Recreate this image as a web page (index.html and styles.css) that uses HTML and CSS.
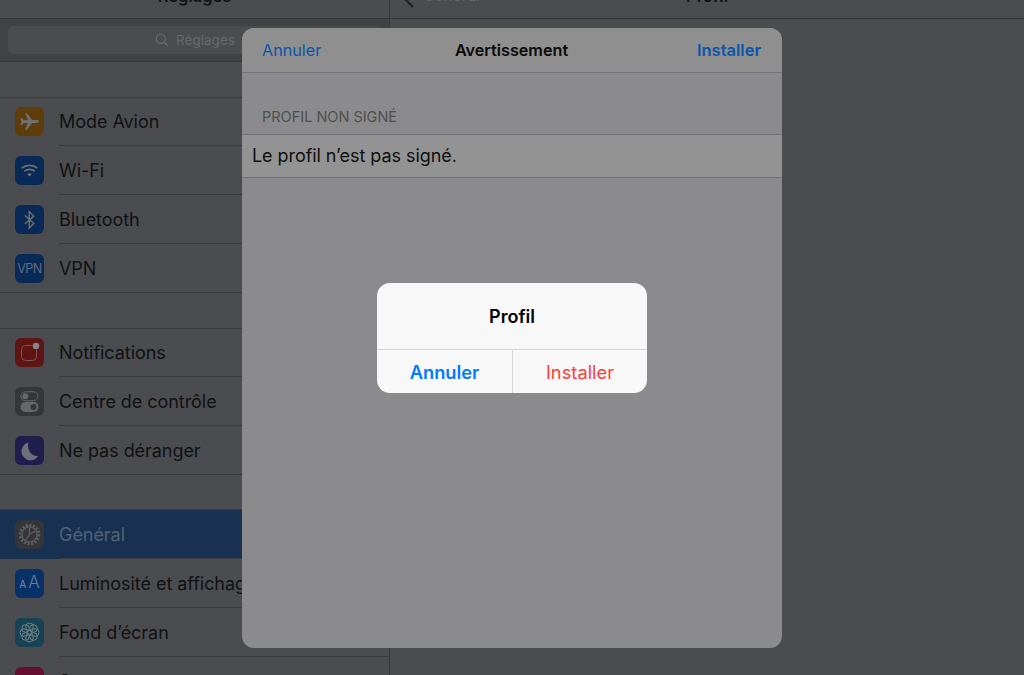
FILE: index.html

```html
<!DOCTYPE html>
<html lang="fr">
<head>
	<meta charset="UTF-8">
	<title>Réglages - Profil</title>
	<link rel="stylesheet" href="styles.css">
</head>
<body>
	<div class="screen">
		<aside class="sidebar">
			<header class="topbar"><span class="topbar-title">Réglages</span></header>
			<div class="searchbar">
				<div class="searchbox">
					<svg class="search-icon" width="14" height="14" viewBox="0 0 14 14"><circle cx="5.800" cy="5.800" r="4.600" fill="none" stroke="#6c6d6f" stroke-width="1.100"/><path d="M9.200 9.200L13 13" stroke="#6c6d6f" stroke-width="1.300" fill="none"/></svg>
					<span>Réglages</span>
				</div>
			</div>

			<ul class="group">
				<li class="row row-short">
					<span class="tile tile-orange"><svg width="29" height="29" viewBox="0 0 29 29"><path d="M24 14.500c0-.9-1.200-1.400-2.600-1.400h-4.200L12 6.200h-1.900l2.800 6.900H8.600L6.900 11H5.500l.9 3.500-.9 3.500h1.400l1.700-2.100h4.300l-2.800 6.900H12l5.200-6.900h4.200c1.400 0 2.600-.5 2.600-1.400z" fill="#6f7072"/></svg></span>
					<span class="label">Mode Avion</span>
				</li>
				<li class="row">
					<span class="tile tile-blue"><svg width="29" height="29" viewBox="0 0 29 29" fill="none" stroke="#6f7072" stroke-width="1.700"><path d="M6.500 12.200c4.600-3.900 11.400-3.900 16 0"/><path d="M9.300 15.200c3-2.500 7.400-2.500 10.400 0"/><path d="M14.500 20.500l-2.400-2.600c1.400-1 3.400-1 4.800 0z" fill="#6f7072" stroke="none"/></svg></span>
					<span class="label">Wi-Fi</span>
				</li>
				<li class="row">
					<span class="tile tile-blue"><svg width="29" height="29" viewBox="0 0 29 29" fill="none" stroke="#6f7072" stroke-width="1.400"><path d="M9.800 10.500l9 8-4.600 4.600V6.500l4.600 4.600-9 8"/></svg></span>
					<span class="label">Bluetooth</span>
				</li>
				<li class="row row-end">
					<span class="tile tile-blue tile-vpn">VPN</span>
					<span class="label">VPN</span>
				</li>
			</ul>

			<ul class="group">
				<li class="row row-short">
					<span class="tile tile-red"><svg width="29" height="29" viewBox="0 0 29 29"><rect x="6.500" y="7.500" width="15" height="15" rx="4" fill="none" stroke="#7c5858" stroke-width="1"/><circle cx="21" cy="8" r="4.300" fill="#5e1513"/><circle cx="21" cy="8" r="3.300" fill="#858688"/></svg></span>
					<span class="label">Notifications</span>
				</li>
				<li class="row">
					<span class="tile tile-gray"><svg width="29" height="29" viewBox="0 0 29 29"><rect x="6" y="4.800" width="17" height="9" rx="4.500" fill="none" stroke="#67686a" stroke-width="1"/><circle cx="10.400" cy="9.300" r="3" fill="#67686a"/><rect x="5.500" y="15" width="18" height="10" rx="5" fill="#67686a"/><circle cx="18.500" cy="20" r="3" fill="#353639"/></svg></span>
					<span class="label">Centre de contrôle</span>
				</li>
				<li class="row row-end">
					<span class="tile tile-violet"><svg width="29" height="29" viewBox="0 0 29 29"><path d="M13.500 6.500a9 9 0 1 0 9.800 13.300c-5.800 1.300-11.800-5-9.800-13.300z" fill="#6e6f7a"/></svg></span>
					<span class="label">Ne pas déranger</span>
				</li>
			</ul>

			<ul class="group group-last">
				<li class="row row-selected">
					<span class="tile tile-gray"><svg width="29" height="29" viewBox="0 0 29 29" fill="none" stroke="#606163"><circle cx="14.500" cy="14.500" r="9.500" stroke-width="2.600" stroke-dasharray="2 1.700"/><circle cx="14.500" cy="14.500" r="7.600" stroke-width="1.300"/><path d="M14.500 14.500V7.500M14.500 14.500l6-3.500M14.500 14.500l-4 5.800" stroke-width="1.200"/></svg></span>
					<span class="label">Général</span>
				</li>
				<li class="row">
					<span class="tile tile-blue2 tile-aa"><small>A</small>A</span>
					<span class="label">Luminosité et affichage</span>
				</li>
				<li class="row">
					<span class="tile tile-teal"><svg width="29" height="29" viewBox="0 0 29 29" fill="none" stroke="#6f8188" stroke-width="1"><circle cx="14.500" cy="8.800" r="3.800"/><circle cx="14.500" cy="20.200" r="3.800"/><circle cx="8.800" cy="14.500" r="3.800"/><circle cx="20.200" cy="14.500" r="3.800"/><circle cx="10.500" cy="10.500" r="3.800"/><circle cx="18.500" cy="10.500" r="3.800"/><circle cx="10.500" cy="18.500" r="3.800"/><circle cx="18.500" cy="18.500" r="3.800"/></svg></span>
					<span class="label">Fond d’écran</span>
				</li>
				<li class="row">
					<span class="tile tile-pink"></span>
					<span class="label">Sons</span>
				</li>
			</ul>
		</aside>

		<main class="detail">
			<header class="topbar topbar-detail">
				<span class="back">
					<svg width="13" height="8" viewBox="0 0 13 8"><path d="M3 -1L11 7" stroke="#222326" stroke-width="2.200" fill="none"/></svg>
					Général
				</span>
				<span class="topbar-title">Profil</span>
			</header>
		</main>
	</div>

	<section class="sheet">
		<header class="sheet-nav">
			<span class="sheet-link">Annuler</span>
			<strong class="sheet-title">Avertissement</strong>
			<span class="sheet-link sheet-link-strong">Installer</span>
		</header>
		<h2 class="sheet-heading">PROFIL NON SIGNÉ</h2>
		<p class="sheet-row">Le profil n’est pas signé.</p>
	</section>

	<div class="alert">
		<div class="alert-title">Profil</div>
		<div class="alert-actions">
			<span class="alert-btn alert-cancel">Annuler</span>
			<span class="alert-btn alert-ok">Installer</span>
		</div>
	</div>
</body>
</html>
```

FILE: styles.css

```css
*{
	box-sizing:border-box;
	margin:0;
	padding:0;
}
body{
	width:1024px;
	height:675px;
	overflow:hidden;
	background:#4b4c4f;
	font-family:"Inter","Liberation Sans",sans-serif;
	color:#111214;
}
.screen{
	display:flex;
	height:675px;
}
.sidebar{
	width:390px;
	border-right:1px solid #38393b;
	overflow:hidden;
}
.detail{
	flex:1;
}
.topbar{
	height:19px;
	border-bottom:1px solid #343537;
	display:flex;
	justify-content:center;
	overflow:hidden;
}
.topbar-detail{
	display:grid;
	grid-template-columns:1fr auto 1fr;
}
.topbar-title{
	font-size:16.500px;
	font-weight:600;
	line-height:20px;
	margin-top:-14px;
}
.back{
	display:flex;
	align-items:flex-start;
	gap:8px;
	margin:-14px 0 0 12px;
	font-size:15.500px;
	line-height:20px;
	color:#646568;
}
.back svg{
	margin-top:14px;
	flex:none;
}

/* search */
.searchbar{
	height:43px;
	background:#414244;
	border-bottom:1px solid #38393b;
	padding:7px 7px 0 8px;
}
.searchbox{
	height:28px;
	padding-bottom:1px;
	background:#4b4c4e;
	border-radius:5px;
	display:flex;
	align-items:center;
	justify-content:center;
	gap:7px;
	font-size:13.500px;
	color:#68696b;
}

/* list */
.group{
	list-style:none;
	margin-top:35px;
	border-top:1px solid #3a3b3d;
	border-bottom:1px solid #3a3b3d;
}
.group-last{
	margin-top:34px;
	border-bottom:0;
}
.row{
	height:49px;
	display:flex;
	align-items:center;
	gap:15px;
	padding-left:15px;
	position:relative;
}
.row-short{
	height:48px;
	padding-bottom:2px;
}
.row-end{
	height:48px;
}
.row::after{
	content:"";
	position:absolute;
	left:59px;
	right:0;
	bottom:0;
	border-bottom:1px solid #3a3b3d;
}
.row-end::after{
	display:none;
}
.row-selected{
	background:#183150;
}
.row-selected .label{
	color:#516277;
}
.label{
	font-size:18px;
	white-space:nowrap;
	letter-spacing:-.05px;
}
.tile{
	width:29px;
	height:29px;
	flex:none;
	border-radius:6px;
	display:flex;
	align-items:center;
	justify-content:center;
	color:#616d82;
}
.tile-orange{background:#5f3d0a;}
.tile-blue{background:#092a56;}
.tile-blue2{background:#083069;}
.tile-red{background:#5e1513;}
.tile-gray{background:#353639;}
.tile-violet{background:#201e4d;}
.tile-teal{background:#184354;}
.tile-pink{background:#660e2e;}
.tile-vpn{
	font-size:12.500px;
	letter-spacing:-.5px;
}
.tile-aa{
	font-size:17px;
	font-weight:300;
	align-items:baseline;
	padding-top:3px;
	gap:2px;
	color:#6c7c98;
}
.tile-aa small{
	font-size:10px;
	font-weight:500;
}

/* modal sheet */
.sheet{
	position:absolute;
	left:242px;
	top:28px;
	width:540px;
	height:620px;
	background:#8b8b8d;
	border-radius:12px;
	overflow:hidden;
}
.sheet-nav{
	height:45px;
	background:#8f8f90;
	border-bottom:1px solid #737375;
	display:grid;
	grid-template-columns:1fr auto 1fr;
	align-items:center;
	padding:0 21px 1px 20px;
	font-size:16.200px;
}
.sheet-title{
	font-weight:600;
	color:#0a0a0a;
}
.sheet-link{
	color:#0b56ab;
}
.sheet-link-strong{
	font-weight:600;
	font-size:16.500px;
	text-align:right;
}
.sheet-heading{
	font-size:14.500px;
	font-weight:400;
	color:#4f4f51;
	padding:35px 20px 0;
	height:61px;
	line-height:18px;
}
.sheet-row{
	height:44px;
	background:#939394;
	border-top:1px solid #737375;
	border-bottom:1px solid #737375;
	padding-left:10px;
	font-size:18px;
	line-height:42px;
	color:#0f0f10;
	letter-spacing:-.06px;
}

/* alert */
.alert{
	position:absolute;
	left:377px;
	top:283px;
	width:270px;
	height:110px;
	background:#f8f8f8;
	border-radius:13px;
	overflow:hidden;
	display:flex;
	flex-direction:column;
}
.alert-title{
	height:67px;
	border-bottom:1px solid #d6d6d8;
	font-size:18px;
	font-weight:600;
	line-height:68px;
	text-align:center;
	color:#000;
}
.alert-actions{
	flex:1;
	display:flex;
}
.alert-btn{
	flex:1;
	font-size:18.300px;
	text-align:center;
	line-height:44px;
}
.alert-cancel{
	flex:none;
	width:136px;
	border-right:1px solid #d6d6d8;
	color:#007aff;
	font-weight:600;
}
.alert-ok{
	color:#ff3d3d;
}
```
